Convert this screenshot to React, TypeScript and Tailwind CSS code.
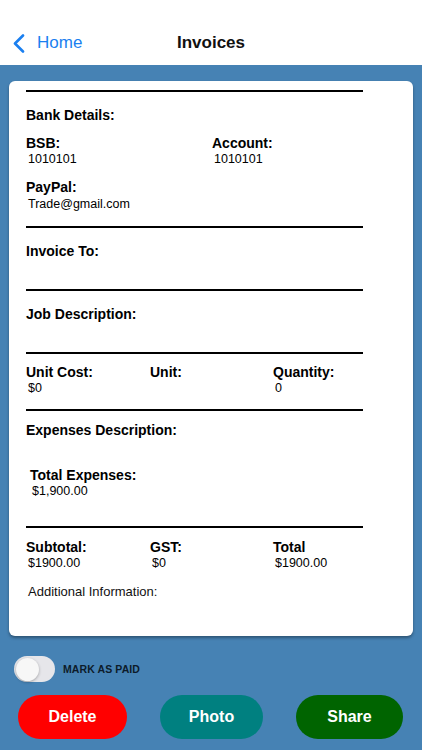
import { useState } from "react";

const font = { fontFamily: '"Liberation Sans", Arial, sans-serif' };

function Rule({ className = "" }: { className?: string }) {
  return <div className={`h-[2px] w-[337px] bg-black ${className}`} />;
}

function Label({ children, className = "" }: { children: React.ReactNode; className?: string }) {
  return <div className={`text-[14px] leading-[17px] font-bold text-black ${className}`}>{children}</div>;
}

function Value({ children, className = "" }: { children: React.ReactNode; className?: string }) {
  return <div className={`pl-[2px] text-[12.5px] leading-[15px] text-black ${className}`}>{children}</div>;
}

export default function App() {
  const [paid, setPaid] = useState(false);

  return (
    <div style={font} className="flex h-[750px] w-full flex-col overflow-hidden bg-[#4682b4]">
      {/* nav bar */}
      <div className="grid h-[65px] grid-cols-[1fr_auto_1fr] items-end bg-white pb-[12px]">
        <button className="flex items-center gap-[12px] pl-[13px] text-[17px] leading-[20px] text-[#1a7ff0]">
          <svg width="12" height="19" viewBox="0 0 12 19" fill="none">
            <path d="M10 1.5 2 9.5l8 8" stroke="#1a7ff0" strokeWidth="2.6" strokeLinecap="round" strokeLinejoin="round" />
          </svg>
          Home
        </button>
        <div className="text-[17px] leading-[20px] font-bold text-[#111]">Invoices</div>
        <div />
      </div>

      {/* invoice card */}
      <div className="mx-[9px] mt-[16px] rounded-[6px] bg-white pt-[9px] pb-[36px] pl-[17px] shadow-[0_2px_3px_rgba(0,0,0,0.35)]">
        <Rule />
        <Label className="mt-[15px]">Bank Details:</Label>

        <div className="mt-[11px] flex">
          <div className="w-[186px]">
            <Label>BSB:</Label>
            <Value>1010101</Value>
          </div>
          <div>
            <Label>Account:</Label>
            <Value>1010101</Value>
          </div>
        </div>

        <Label className="mt-[12px]">PayPal:</Label>
        <Value className="mt-[1px]">Trade@gmail.com</Value>

        <Rule className="mt-[14px]" />
        <Label className="mt-[15px]">Invoice To:</Label>

        <Rule className="mt-[29px]" />
        <Label className="mt-[15px]">Job Description:</Label>

        <Rule className="mt-[29px]" />
        <div className="mt-[10px] flex">
          <div className="w-[124px]">
            <Label>Unit Cost:</Label>
            <Value>$0</Value>
          </div>
          <div className="w-[123px]">
            <Label>Unit:</Label>
          </div>
          <div>
            <Label>Quantity:</Label>
            <Value>0</Value>
          </div>
        </div>

        <Rule className="mt-[13px]" />
        <Label className="mt-[11px]">Expenses Description:</Label>

        <div className="mt-[28px] pl-[4px]">
          <Label>Total Expenses:</Label>
          <Value>$1,900.00</Value>
        </div>

        <Rule className="mt-[27px]" />
        <div className="mt-[11px] flex">
          <div className="w-[124px]">
            <Label>Subtotal:</Label>
            <Value>$1900.00</Value>
          </div>
          <div className="w-[123px]">
            <Label>GST:</Label>
            <Value>$0</Value>
          </div>
          <div>
            <Label>Total</Label>
            <Value>$1900.00</Value>
          </div>
        </div>

        <div className="mt-[13px] pl-[2px] text-[13px] leading-[16px] text-[#111]">Additional Information:</div>
      </div>

      {/* mark as paid */}
      <div className="mt-[20px] flex items-center gap-[8px] pl-[14px]">
        <button
          onClick={() => setPaid(!paid)}
          className={`flex h-[26px] w-[41px] items-center rounded-full p-[1.5px] ${paid ? "justify-end bg-[#34c759]" : "justify-start bg-[#e6e6ea]"}`}
        >
          <span className="h-[23px] w-[23px] rounded-full bg-[#f7f7f7] shadow-[0_1px_3px_rgba(0,0,0,0.3)]" />
        </button>
        <span className="text-[10.5px] leading-[13px] font-bold tracking-[0.1px] text-[#0d1b2a]">MARK AS PAID</span>
      </div>

      {/* actions */}
      <div className="mt-[13px] flex justify-between pl-[18px] pr-[19px]">
        <button className="h-[44px] w-[109px] rounded-full bg-[#ff0000] text-[16px] font-bold text-white">Delete</button>
        <button className="h-[44px] w-[103px] rounded-full bg-[#008080] text-[16px] font-bold text-white">Photo</button>
        <button className="h-[44px] w-[107px] rounded-full bg-[#006400] text-[16px] font-bold text-white">Share</button>
      </div>
    </div>
  );
}
